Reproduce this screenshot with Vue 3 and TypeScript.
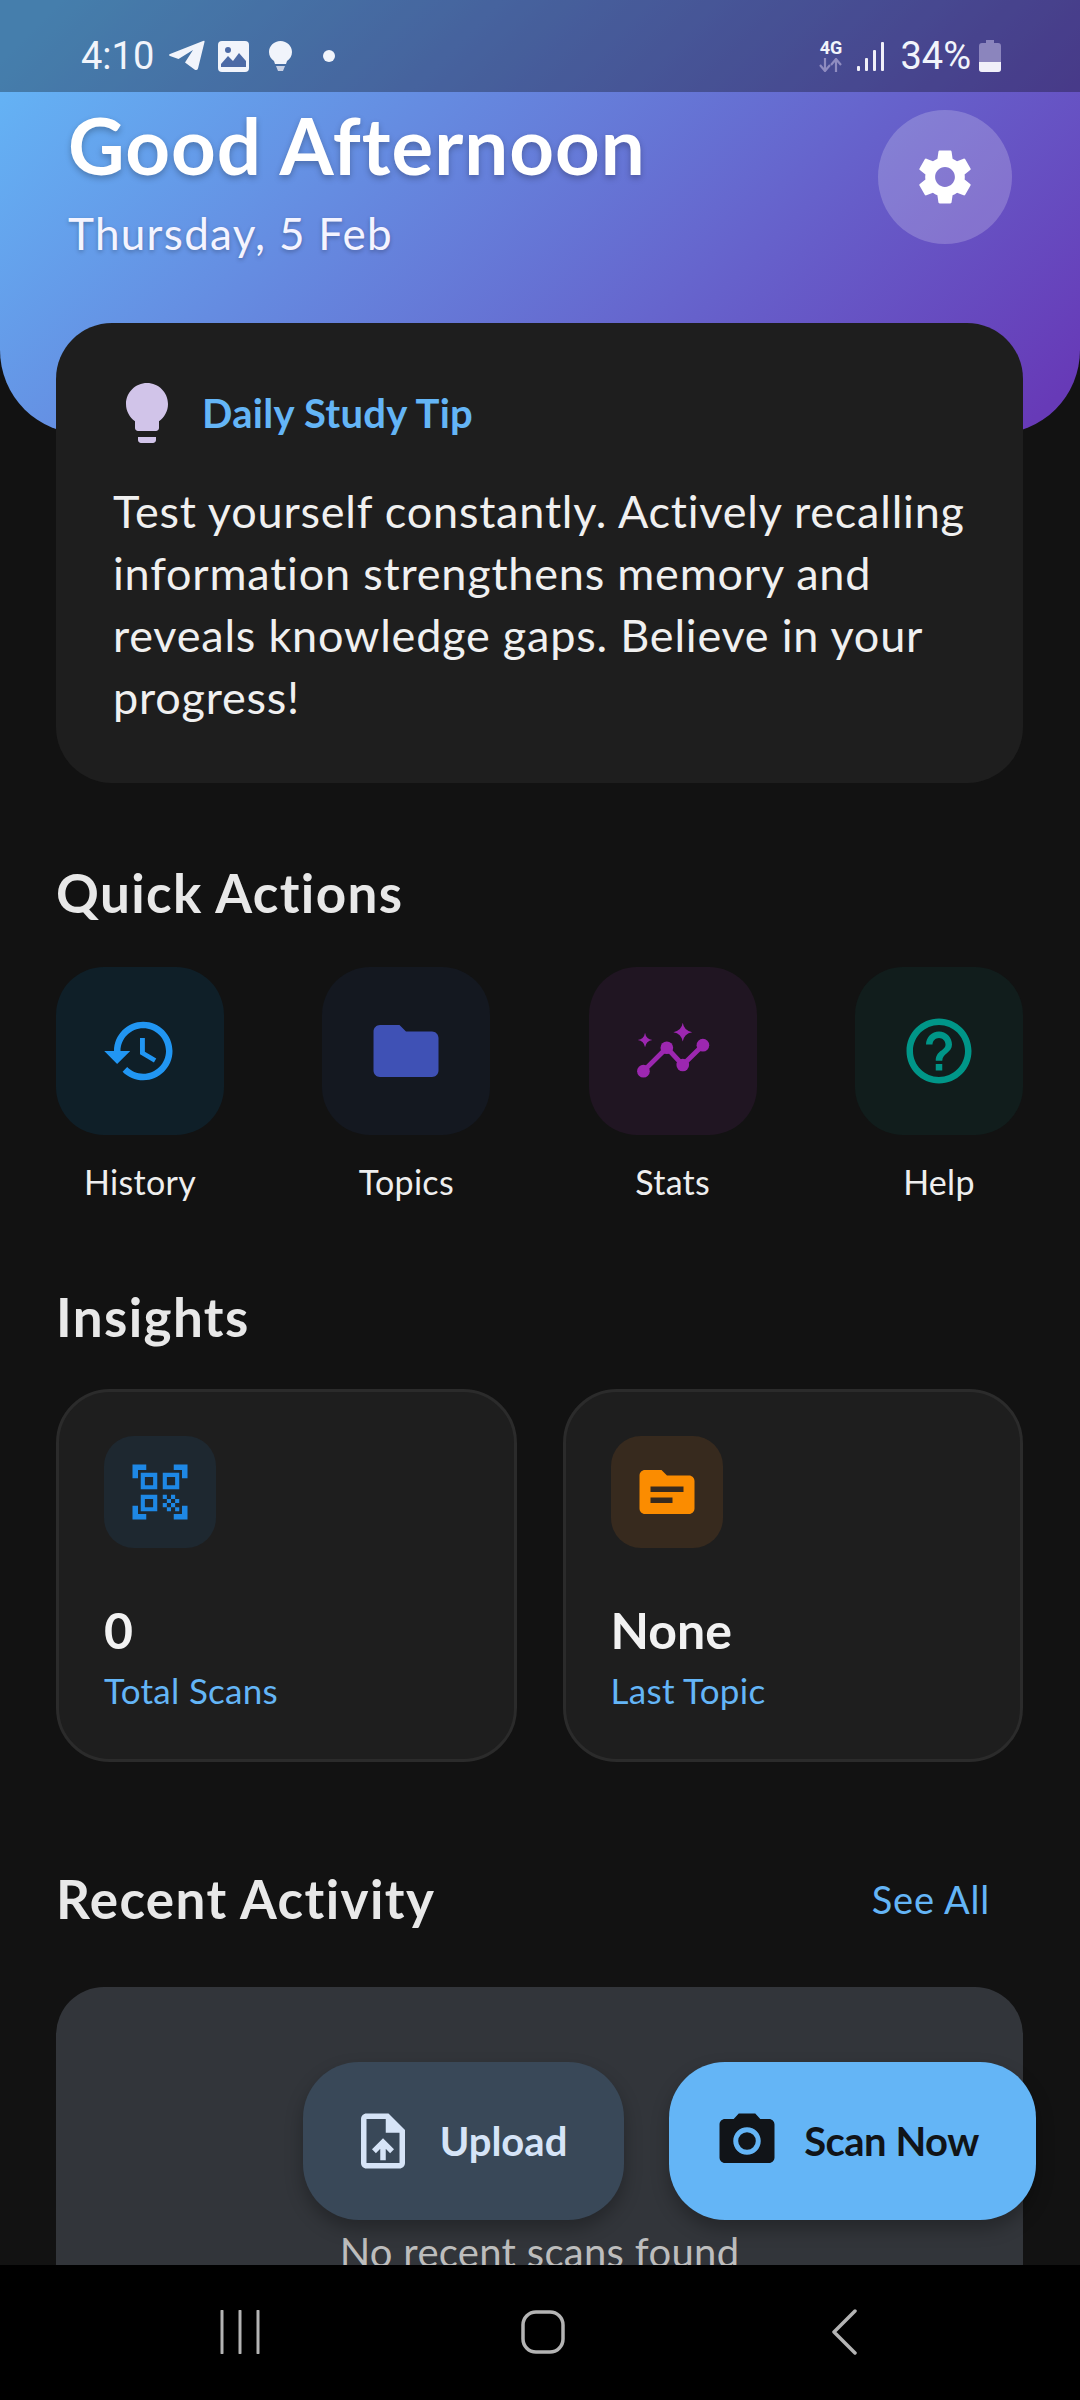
<script setup lang="ts">
type Action = { label: string; bg: string; color: string; path: string }

const actions: Action[] = [
  {
    label: 'History',
    bg: '#0f1f28',
    color: '#2196f3',
    path: 'M13 3c-4.97 0-9 4.03-9 9H1l3.89 3.89.07.14L9 12H6c0-3.87 3.13-7 7-7s7 3.13 7 7-3.13 7-7 7c-1.93 0-3.68-.79-4.94-2.06l-1.42 1.42C8.27 19.99 10.51 21 13 21c4.97 0 9-4.03 9-9s-4.03-9-9-9zm-1 5v5l4.28 2.54.72-1.21-3.5-2.08V8H12z',
  },
  {
    label: 'Topics',
    bg: '#141820',
    color: '#3f51b5',
    path: 'M10 4H4c-1.1 0-1.99.9-1.99 2L2 18c0 1.1.9 2 2 2h16c1.1 0 2-.9 2-2V8c0-1.1-.9-2-2-2h-8l-2-2z',
  },
  {
    label: 'Stats',
    bg: '#201522',
    color: '#9c27b0',
    path: 'M15 3.3Q15.4 5.800 17.900 6.200 15.400 6.600 15 9.100 14.600 6.600 12.100 6.200 14.600 5.800 15 3.300zM3.400 6.350Q3.700 8.300 5.650 8.600 3.700 8.900 3.400 10.850 3.100 8.900 1.150 8.600 3.100 8.300 3.400 6.350z',
  },
  {
    label: 'Help',
    bg: '#111d1c',
    color: '#009688',
    path: 'M11 18h2v-2h-2v2zm1-16C6.48 2 2 6.48 2 12s4.48 10 10 10 10-4.48 10-10S17.52 2 12 2zm0 18c-4.41 0-8-3.59-8-8s3.59-8 8-8 8 3.59 8 8-3.59 8-8 8zm0-14c-2.21 0-4 1.79-4 4h2c0-1.1.9-2 2-2s2 .9 2 2c0 2-3 1.75-3 5h2c0-2.25 3-2.5 3-5 0-2.21-1.79-4-4-4z',
  },
]

const insights = [
  {
    value: '0',
    label: 'Total Scans',
    bg: '#1e2830',
    color: '#1e88e5',
    path: 'M9.5 6.5v3h-3v-3h3M11 5H5v6h6V5zm-1.5 9.5v3h-3v-3h3M11 13H5v6h6v-6zm6.5-6.5v3h-3v-3h3M19 5h-6v6h6V5zm-6 8h1.5v1.5H13V13zm1.5 1.5H16V16h-1.5v-1.5zM16 13h1.5v1.5H16V13zm-3 3h1.5v1.5H13V16zm1.5 1.5H16V19h-1.5v-1.5zM16 16h1.5v1.5H16V16zm1.5-1.5H19V16h-1.5v-1.5zm0 3H19V19h-1.5v-1.5zM22 7h-2V4h-3V2h5v5zm0 15v-5h-2v3h-3v2h5zM2 22h5v-2H4v-3H2v5zM2 2v5h2V4h3V2H2z',
  },
  {
    value: 'None',
    label: 'Last Topic',
    bg: '#372a1e',
    color: '#fb8c00',
    path: 'M20 6h-8l-2-2H4c-1.1 0-1.99.9-1.99 2L2 18c0 1.1.9 2 2 2h16c1.1 0 2-.9 2-2V8c0-1.1-.9-2-2-2zm-6 10H6v-2h8v2zm4-4H6v-2h12v2z',
  },
]
</script>

<template>
  <div class="screen">
    <header class="hero">
      <div class="status">
        <div class="status-left">
          <span class="clock">4:10</span>
          <svg class="st-send" viewBox="0 0 38 32"><path d="M35 1 Q37 0 36.500 2 L30 28.500 Q29 31 26.500 29.500 L17 22.500 L25 10 L10.500 19 L2 16 Q0 15 2 14 Z" fill="#f1f4fb" /></svg>
          <svg class="st-img" viewBox="0 0 31 31"><rect width="31" height="31" rx="4" fill="#f1f4fb" /><circle cx="10" cy="9" r="3" fill="#4c6aa6" /><path d="M3 23 L10 15 L15 20 L21 12 L28 20 V26 H3 Z" fill="#4c6aa6" /></svg>
          <svg class="st-bulb" viewBox="0 0 23 30"><path d="M11.500 0 C5 0 0 5 0 11 C0 15 2 18 5 20 L6 23 H17 L18 20 C21 18 23 15 23 11 C23 5 18 0 11.500 0 Z" fill="#f1f4fb" /><path d="M7 25 H16 L14 30 H9 Z" fill="#c7d0e4" /></svg>
          <span class="st-dot"></span>
        </div>
        <div class="status-right">
          <div class="net">
            <span class="net-label">4G</span>
            <svg class="net-arrows" viewBox="0 0 25 14"><path d="M7 0 V12 M2 7 L7 13 L12 7 M18 14 V2 M13 7 L18 1 L23 7" fill="none" stroke="#8f8cc0" stroke-width="2.200" /></svg>
          </div>
          <svg class="st-signal" viewBox="0 0 27 29"><g fill="#f1f0f9"><rect x="0" y="24" width="3" height="5" rx="1" /><rect x="8" y="16" width="3" height="13" rx="1" /><rect x="16" y="8" width="3" height="21" rx="1" /><rect x="24" y="0" width="3" height="29" rx="1" /></g></svg>
          <span class="batt-text">34%</span>
          <svg class="st-batt" viewBox="0 0 22 32"><path d="M7 0 H15 V3 H19 Q22 3 22 6 V29 Q22 32 19 32 H3 Q0 32 0 29 V6 Q0 3 3 3 H7 Z" fill="#8b85bd" /><path d="M0 22 H22 V29 Q22 32 19 32 H3 Q0 32 0 29 Z" fill="#f1f0f9" /></svg>
        </div>
      </div>
      <div class="hero-row">
        <div class="hero-text">
          <h1 class="greeting">Good Afternoon</h1>
          <p class="date">Thursday, 5 Feb</p>
        </div>
        <div class="gear">
          <svg viewBox="0 0 24 24" width="66" height="66"><path fill="#fff" d="M19.14 12.94c.04-.3.06-.61.06-.94 0-.32-.02-.64-.07-.94l2.03-1.58c.18-.14.23-.41.12-.61l-1.92-3.32c-.12-.22-.37-.29-.59-.22l-2.39.96c-.5-.38-1.03-.7-1.62-.94l-.36-2.54c-.04-.24-.24-.41-.48-.41h-3.84c-.24 0-.43.17-.47.41l-.36 2.54c-.59.24-1.13.57-1.62.94l-2.39-.96c-.22-.08-.47 0-.59.22L2.74 8.87c-.12.21-.08.47.12.61l2.03 1.58c-.05.3-.09.63-.09.94s.02.64.07.94l-2.03 1.58c-.18.14-.23.41-.12.61l1.92 3.32c.12.22.37.29.59.22l2.39-.96c.5.38 1.03.7 1.62.94l.36 2.54c.05.24.24.41.48.41h3.84c.24 0 .44-.17.47-.41l.36-2.54c.59-.24 1.13-.56 1.62-.94l2.39.96c.22.08.47 0 .59-.22l1.92-3.32c.12-.22.07-.47-.12-.61l-2.01-1.58zM12 15.6c-1.98 0-3.6-1.62-3.6-3.6s1.62-3.6 3.6-3.6 3.6 1.62 3.6 3.6-1.62 3.6-3.6 3.6z" /></svg>
        </div>
      </div>
    </header>

    <main class="content">
      <section class="tip">
        <div class="tip-head">
          <svg viewBox="0 0 24 24" width="72" height="72"><path fill="#d1c4e9" d="M9 21c0 .55.45 1 1 1h4c.55 0 1-.45 1-1v-1H9v1zm3-19C8.14 2 5 5.14 5 9c0 2.38 1.19 4.47 3 5.74V17c0 .55.45 1 1 1h6c.55 0 1-.45 1-1v-2.26c1.81-1.27 3-3.36 3-5.74 0-3.86-3.14-7-7-7z" /></svg>
          <span class="tip-title">Daily Study Tip</span>
        </div>
        <p class="tip-body">Test yourself constantly. Actively recalling information strengthens memory and reveals knowledge gaps. Believe in your progress!</p>
      </section>

      <h2 class="section-title quick-title">Quick Actions</h2>
      <div class="actions">
        <div v-for="a in actions" :key="a.label" class="action">
          <div class="action-tile" :style="{ background: a.bg }">
            <svg viewBox="0 0 24 24" width="78" height="78">
              <path :fill="a.color" :d="a.path" />
              <g v-if="a.label === 'Stats'">
                <polyline points="2.900,18.200 10.100,11 15,16.300 21.200,10.200" fill="none" :stroke="a.color" stroke-width="1.500" />
                <circle cx="2.900" cy="18.200" r="1.950" :fill="a.color" />
                <circle cx="10.100" cy="11" r="1.950" :fill="a.color" />
                <circle cx="15" cy="16.300" r="1.950" :fill="a.color" />
                <circle cx="21.200" cy="10.200" r="1.950" :fill="a.color" />
              </g>
            </svg>
          </div>
          <span class="action-label">{{ a.label }}</span>
        </div>
      </div>

      <h2 class="section-title insights-title">Insights</h2>
      <div class="insights">
        <div v-for="i in insights" :key="i.label" class="insight">
          <div class="insight-icon" :style="{ background: i.bg }">
            <svg viewBox="0 0 24 24" width="66" height="66"><path :fill="i.color" :d="i.path" /></svg>
          </div>
          <div class="insight-value">{{ i.value }}</div>
          <div class="insight-label">{{ i.label }}</div>
        </div>
      </div>

      <div class="recent-head">
        <h2 class="section-title">Recent Activity</h2>
        <span class="see-all">See All</span>
      </div>
      <div class="recent-card">
        <p class="empty">No recent scans found</p>
      </div>
    </main>

    <div class="fabs">
      <div class="fab fab-upload">
        <svg viewBox="0 0 24 24" width="66" height="66"><path fill="#d6e4f7" d="M14 2H6c-1.100 0-1.990.9-1.990 2L4 20c0 1.100.89 2 1.990 2H18c1.100 0 2-.9 2-2V8l-6-6zm4 18H6V4h7v5h5v11zM8 15.010l1.410 1.410L11 14.840V19h2v-4.160l1.590 1.590L16 15.010 12.010 11z" /></svg>
        <span>Upload</span>
      </div>
      <div class="fab fab-scan">
        <svg viewBox="0 0 24 24" width="66" height="66"><path fill="#111418" d="M12 15.200a3.200 3.200 0 100-6.400 3.200 3.200 0 000 6.400z" /><path fill="#111418" d="M9 2L7.170 4H4c-1.100 0-2 .9-2 2v12c0 1.100.9 2 2 2h16c1.100 0 2-.9 2-2V6c0-1.100-.9-2-2-2h-3.170L15 2H9zm3 15c-2.760 0-5-2.240-5-5s2.240-5 5-5 5 2.240 5 5-2.240 5-5 5z" /></svg>
        <span>Scan Now</span>
      </div>
    </div>

    <nav class="navbar">
      <svg viewBox="0 0 40 44" width="40" height="44"><path d="M2 1 V43 M20 1 V43 M38 1 V43" stroke="#b4b4b4" stroke-width="3" stroke-linecap="round" fill="none" /></svg>
      <svg class="nav-home" viewBox="0 0 44 44" width="44" height="44"><rect x="2" y="2" width="40" height="40" rx="13" stroke="#b4b4b4" stroke-width="3.500" fill="none" /></svg>
      <svg viewBox="0 0 26 46" width="26" height="46"><path d="M24 2 L3 23 L24 44" stroke="#b4b4b4" stroke-width="3.500" stroke-linecap="round" stroke-linejoin="round" fill="none" /></svg>
    </nav>
  </div>
</template>

<style scoped>
.screen {
  position: relative;
  width: 1080px;
  height: 2400px;
  overflow: hidden;
  background: #121212;
  font-family: Lato, 'Noto Sans', sans-serif;
  color: #fff;
}

.hero {
  height: 434px;
  box-sizing: border-box;
  background: linear-gradient(135deg, #64b5f6 4%, #673ab7 96%);
  border-radius: 0 0 84px 84px;
}

.status {
  height: 92px;
  box-sizing: border-box;
  padding: 0 79px 0 81px;
  background: rgba(0, 0, 0, 0.3);
  display: flex;
  justify-content: space-between;
  align-items: center;
  font-family: Roboto, sans-serif;
  color: #f1f4fb;
}

.status-left,
.status-right {
  display: flex;
  align-items: center;
  padding-top: 20px;
}

.clock {
  font-size: 38px;
  line-height: 40px;
  width: 87px;
}

.st-send { width: 38px; height: 32px; margin-right: 12px; }
.st-img { width: 31px; height: 31px; margin-right: 20px; }
.st-bulb { width: 23px; height: 30px; margin-right: 31px; }

.st-dot {
  width: 12px;
  height: 12px;
  border-radius: 50%;
  background: #f1f4fb;
}

.net {
  width: 25px;
  margin-right: 14px;
  display: flex;
  flex-direction: column;
  align-items: center;
  gap: 2px;
}

.net-label {
  font-size: 18px;
  line-height: 16px;
  font-weight: 700;
}

.net-arrows { width: 25px; height: 14px; }
.st-signal { width: 27px; height: 29px; margin-right: 16px; }

.batt-text {
  font-size: 38px;
  line-height: 40px;
  margin-right: 8px;
}

.st-batt { width: 22px; height: 32px; }

.hero-row {
  display: flex;
  justify-content: space-between;
  align-items: flex-start;
  padding: 10px 68px 0 68px;
}

.greeting {
  margin: 0;
  font-size: 78px;
  line-height: 86px;
  font-weight: 700;
  letter-spacing: 1px;
  color: #fff;
  text-shadow: 0 3px 6px rgba(0, 0, 0, 0.25);
}

.date {
  margin: 20px 0 0;
  font-size: 44px;
  line-height: 50px;
  letter-spacing: 1.3px;
  color: #f4f4ff;
  text-shadow: 0 2px 4px rgba(0, 0, 0, 0.25);
}

.gear {
  width: 134px;
  height: 134px;
  margin-top: 8px;
  border-radius: 50%;
  background: rgba(255, 255, 255, 0.2);
  display: flex;
  align-items: center;
  justify-content: center;
}

.content {
  padding: 0 57px 0 56px;
}

.tip {
  margin-top: -111px;
  position: relative;
  height: 460px;
  box-sizing: border-box;
  padding: 54px 56px 0 57px;
  background: #1e1e1e;
  border-radius: 56px;
}

.tip-head {
  display: flex;
  align-items: center;
  gap: 19px;
  height: 72px;
  margin-left: -2px;
}

.tip-title {
  font-size: 40px;
  font-weight: 700;
  letter-spacing: 0.3px;
  color: #64b5f6;
}

.tip-body {
  margin: 31px 0 0;
  font-size: 45px;
  line-height: 62px;
  letter-spacing: 0.8px;
  color: #f0f0f0;
}

.section-title {
  margin: 0;
  font-size: 53px;
  line-height: 60px;
  font-weight: 700;
  letter-spacing: 1.4px;
  color: #e8e8e8;
}

.quick-title { margin-top: 80px; }

.actions {
  margin-top: 44px;
  display: flex;
  justify-content: space-between;
}

.action {
  width: 168px;
  display: flex;
  flex-direction: column;
  align-items: center;
}

.action-tile {
  width: 168px;
  height: 168px;
  border-radius: 48px;
  display: flex;
  align-items: center;
  justify-content: center;
}

.action-label {
  margin-top: 27px;
  font-size: 34px;
  line-height: 40px;
  letter-spacing: 0.3px;
  color: #eeeeee;
}

.insights-title { margin-top: 85px; }

.insights {
  margin-top: 42px;
  display: grid;
  grid-template-columns: 1fr 1fr;
  gap: 46px;
}

.insight {
  height: 373px;
  box-sizing: border-box;
  padding: 44px 45px 0;
  background: #1e1e1e;
  border: 3px solid #2b2b2b;
  border-radius: 54px;
}

.insight-icon {
  width: 112px;
  height: 112px;
  border-radius: 30px;
  display: flex;
  align-items: center;
  justify-content: center;
}

.insight-value {
  margin-top: 52px;
  font-size: 50px;
  line-height: 60px;
  font-weight: 700;
  color: #f2f2f2;
}

.insight-label {
  margin-top: 10px;
  font-size: 35px;
  line-height: 40px;
  letter-spacing: 0.3px;
  color: #64b5f6;
}

.recent-head {
  margin-top: 107px;
  display: flex;
  justify-content: space-between;
  align-items: center;
  padding-right: 33px;
}

.see-all {
  font-size: 38px;
  letter-spacing: 0.8px;
  color: #64b5f6;
}

.recent-card {
  margin-top: 58px;
  height: 420px;
  box-sizing: border-box;
  padding-top: 243px;
  background: #32353a;
  border-radius: 48px;
}

.empty {
  margin: 0;
  text-align: center;
  font-size: 40px;
  line-height: 44px;
  letter-spacing: 0.3px;
  color: #bdbdbd;
}

.fabs {
  position: absolute;
  top: 2062px;
  left: 303px;
  display: flex;
  gap: 45px;
}

.fab {
  height: 158px;
  box-sizing: border-box;
  border-radius: 56px;
  display: flex;
  align-items: center;
  justify-content: center;
  gap: 24px;
  font-size: 40px;
  font-weight: 700;
  box-shadow: 0 9px 18px rgba(0, 0, 0, 0.28);
}

.fab-upload {
  width: 321px;
  padding-right: 10px;
  background: #394858;
  color: #d6e4f7;
}

.fab-scan {
  width: 367px;
  padding-right: 12px;
  letter-spacing: -0.5px;
  background: #64b5f6;
  color: #111418;
}

.navbar {
  position: absolute;
  left: 0;
  right: 0;
  bottom: 0;
  height: 135px;
  box-sizing: border-box;
  background: #000;
  display: flex;
  align-items: center;
  justify-content: space-between;
  padding: 0 223px 2px 220px;
}

.nav-home { margin-right: 6px; }
</style>

<style>
body { background: #121212; }
</style>
